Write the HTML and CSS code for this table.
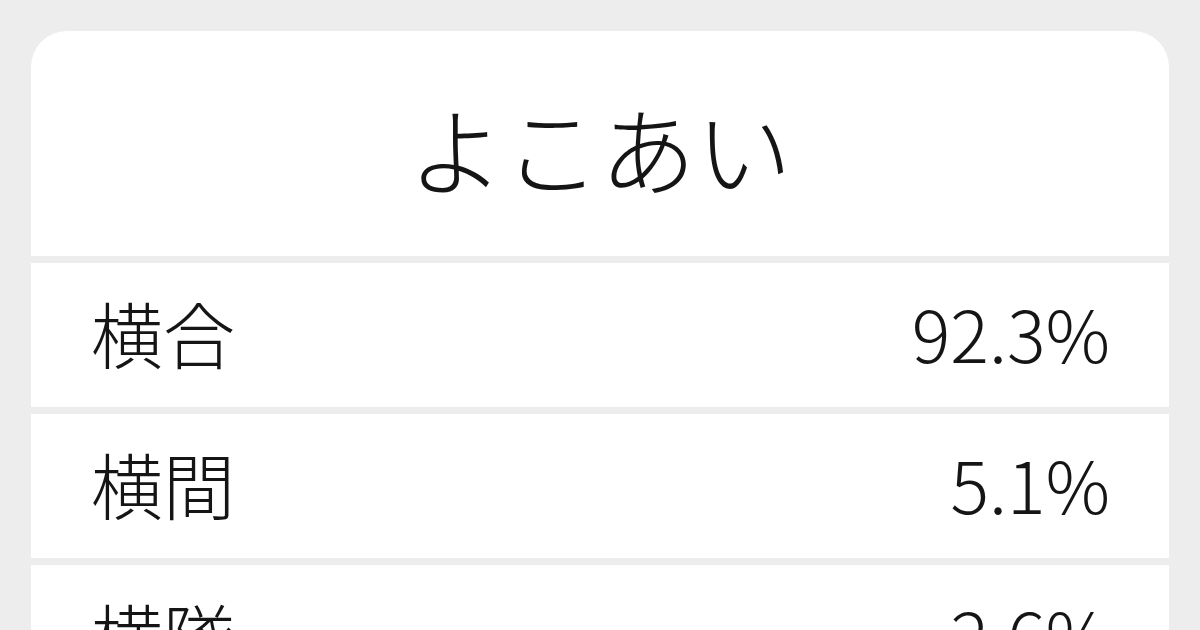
FILE: index.html
```html
<!DOCTYPE html>
<html lang="ja">
<head>
<meta charset="utf-8">
<link rel="stylesheet" href="styles.css">
</head>
<body>
<div class="page">
  <div class="card">
    <div class="title">よこあい</div>
    <div class="row"><span class="word">横合</span><span class="pct">92.3%</span></div>
    <div class="row"><span class="word">横間</span><span class="pct">5.1%</span></div>
    <div class="row"><span class="word">横隊</span><span class="pct">2.6%</span></div>
  </div>
</div>
</body>
</html>
```
FILE: styles.css
```css
html, body {
  margin: 0;
  padding: 0;
  background: #ededed;
  width: 1200px;
  height: 630px;
  overflow: hidden;
}
.page {
  padding: 31px;
  font-family: "Noto Sans CJK JP", "Noto Sans", sans-serif;
  font-weight: 200;
  color: #151515;
}
.card {
  width: 1138px;
  border-radius: 36px 36px 0 0;
  overflow: hidden;
  display: flex;
  flex-direction: column;
  gap: 7px;
}
.title {
  background: #fff;
  height: 225px;
  display: flex;
  align-items: center;
  justify-content: center;
  font-size: 96px;
  line-height: 1;
  padding-top: 6px;
  box-sizing: border-box;
}
.row {
  background: #fff;
  height: 144px;
  display: flex;
  align-items: center;
  justify-content: space-between;
  padding: 0 59px 6px 60px;
  box-sizing: border-box;
  font-size: 72px;
  line-height: 1;
  flex-shrink: 0;
}
```
